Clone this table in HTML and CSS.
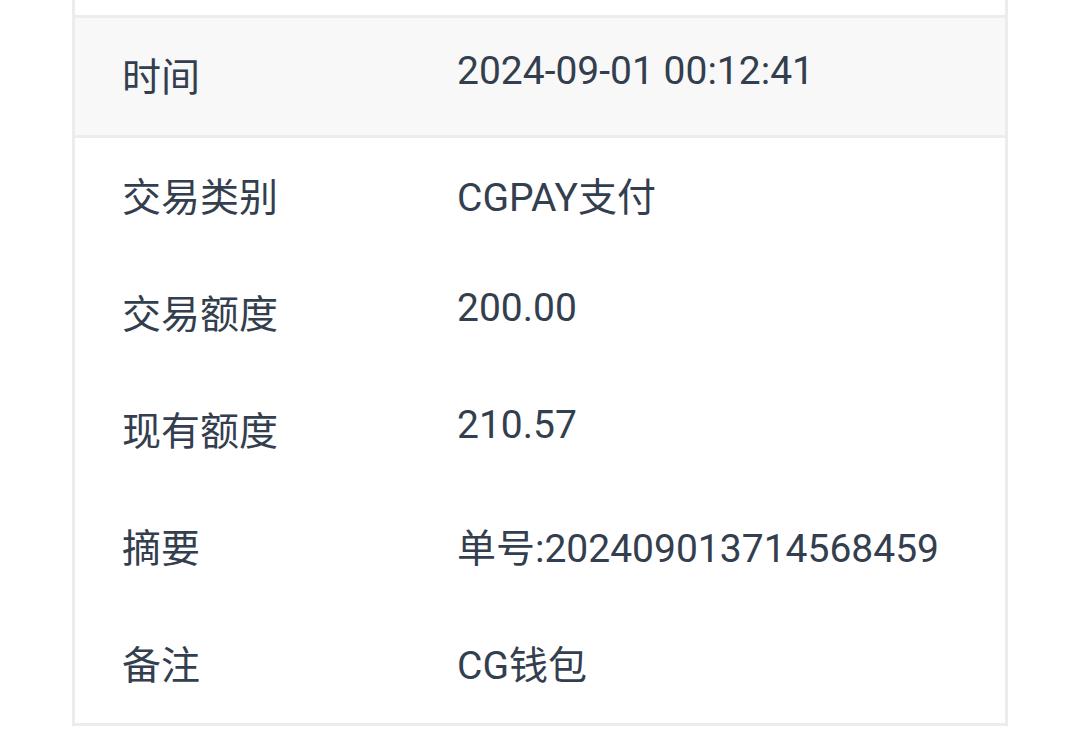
FILE: index.html
```html
<!DOCTYPE html>
<html lang="zh-CN">
<head>
<meta charset="utf-8">
<link rel="stylesheet" href="styles.css">
</head>
<body>
<div class="card">
  <div class="stub"></div>
  <div class="row row-head">
    <div class="label">时间</div>
    <div class="value num">2024-09-01 00:12:41</div>
  </div>
  <div class="row">
    <div class="label">交易类别</div>
    <div class="value">CGPAY支付</div>
  </div>
  <div class="row">
    <div class="label">交易额度</div>
    <div class="value num">200.00</div>
  </div>
  <div class="row">
    <div class="label">现有额度</div>
    <div class="value num">210.57</div>
  </div>
  <div class="row">
    <div class="label">摘要</div>
    <div class="value">单号:202409013714568459</div>
  </div>
  <div class="row">
    <div class="label">备注</div>
    <div class="value">CG钱包</div>
  </div>
</div>
</body>
</html>
```
FILE: styles.css
```css
html, body {
  margin: 0;
  padding: 0;
  background: #ffffff;
}
body {
  width: 1080px;
  height: 744px;
  overflow: hidden;
  font-family: Roboto, "Noto Sans CJK SC", sans-serif;
  color: #333e4e;
}
.card {
  margin-left: 72px;
  width: 930px;
  border: 3px solid #ececec;
  border-top: none;
  background: #ffffff;
}
.stub {
  height: 15px;
}
.row {
  display: grid;
  grid-template-columns: 335px 1fr;
  align-items: center;
  height: 111px;
  padding: 0 0 6px 47px;
  font-size: 39px;
  line-height: normal;
}
.row-head {
  background: #f8f8f8;
  border-top: 3px solid #ececec;
  border-bottom: 3px solid #ececec;
}
.label, .value {
  white-space: nowrap;
}
.value.num {
  padding-bottom: 5px;
}
```
